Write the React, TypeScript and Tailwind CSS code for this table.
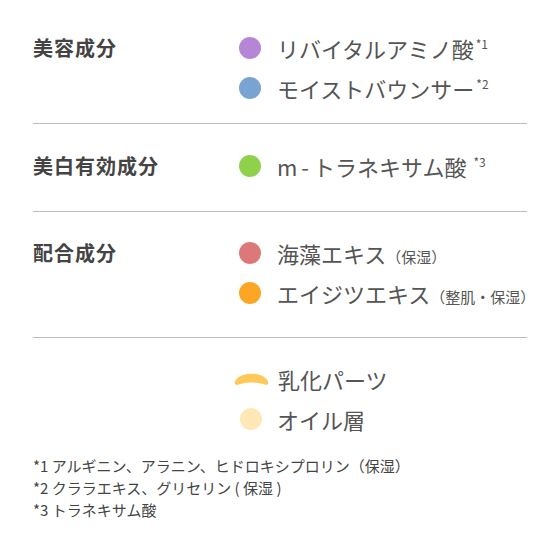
import type { ReactNode } from "react";

type Item = {
  color: string;
  name: ReactNode;
};

const font = { fontFamily: '"Noto Sans CJK JP", "Noto Sans", sans-serif' };

function Dot({ color }: { color: string }) {
  return <span className={`block h-[22px] w-[22px] shrink-0 rounded-full ${color}`} />;
}

function Sup({ children }: { children: ReactNode }) {
  return <span className="relative -top-[9px] ml-[2px] text-[12px] text-[#555]">{children}</span>;
}

function Note({ children }: { children: ReactNode }) {
  return <span className="text-[15px] text-[#555]">{children}</span>;
}

function Section({ label, items, className }: { label: string; items: Item[]; className: string }) {
  return (
    <div className={`flex border-b border-[#bdbdbd] ${className}`}>
      <div className="w-[206px] shrink-0 text-[20px] font-bold leading-[40px] tracking-[1px] text-[#444]">
        {label}
      </div>
      <div className="flex flex-col">
        {items.map((item, i) => (
          <div key={i} className="flex h-[40px] items-center gap-[16px]">
            <Dot color={item.color} />
            <span className="whitespace-nowrap text-[22px] text-[#555]">{item.name}</span>
          </div>
        ))}
      </div>
    </div>
  );
}

export default function App() {
  return (
    <div className="h-[548px] w-[560px] bg-white px-[33px] pt-[28px]" style={font}>
      <Section
        label="美容成分"
        className="pb-[15px]"
        items={[
          { color: "bg-[#b685d6]", name: <>リバイタルアミノ酸<Sup>*1</Sup></> },
          { color: "bg-[#78a3d2]", name: <>モイストバウンサー<Sup>*2</Sup></> },
        ]}
      />
      <Section
        label="美白有効成分"
        className="pt-[22px] pb-[25px]"
        items={[
          {
            color: "bg-[#8fd14a]",
            name: (
              <>
                <span className="tracking-[4px]">m-</span>トラネキサム酸 <Sup>*3</Sup>
              </>
            ),
          },
        ]}
      />
      <Section
        label="配合成分"
        className="pt-[21px] pb-[24px]"
        items={[
          { color: "bg-[#dd7878]", name: <>海藻エキス<Note>（保湿）</Note></> },
          { color: "bg-[#fca624]", name: <>エイジツエキス<Note>（整肌・保湿）</Note></> },
        ]}
      />

      <div className="flex flex-col pl-[201px] pt-[21px]">
        <div className="flex h-[40px] items-center gap-[9px]">
          <svg width="35" height="14" viewBox="0 0 35 14" className="shrink-0">
            <path
              d="M1 9.5 C 5 -1, 30 -1, 34 9.5 C 34.8 12, 33 13.6, 30.5 12.6 C 23 9.8, 12 9.8, 4.5 12.6 C 2 13.6, 0.2 12, 1 9.5 Z"
              fill="#ffc95a"
            />
          </svg>
          <span className="text-[22px] text-[#555]">乳化パーツ</span>
        </div>
        <div className="flex h-[40px] items-center gap-[15px] pl-[6px]">
          <Dot color="bg-[#ffe8b6]" />
          <span className="text-[22px] text-[#555]">オイル層</span>
        </div>
      </div>

      <div className="mt-[16px] flex flex-col text-[15px] leading-[22px] text-[#444]">
        <p>*1 アルギニン、アラニン、ヒドロキシプロリン（保湿）</p>
        <p>*2 クララエキス、グリセリン ( 保湿 )</p>
        <p>*3 トラネキサム酸</p>
      </div>
    </div>
  );
}
